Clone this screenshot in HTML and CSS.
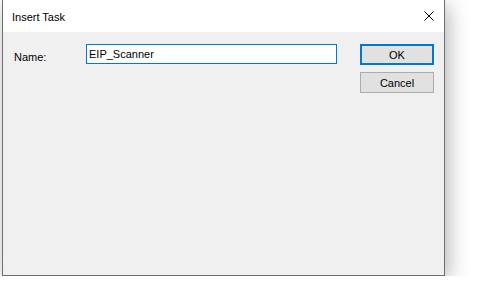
FILE: index.html
```html
<!DOCTYPE html>
<html lang="en">
<head>
    <meta charset="UTF-8">
    <title>Insert Task</title>
    <link rel="stylesheet" href="styles.css">
</head>
<body>
    <div class="dialog">
        <div class="title-bar">
            <span class="title">Insert Task</span>
            <span class="close">
                <svg width="10" height="10" viewBox="0 0 10 10">
                    <path d="M0.5 0.5 L9.5 9.5 M9.5 0.5 L0.5 9.5" stroke="#000" stroke-width="1" fill="none"/>
                </svg>
            </span>
        </div>
        <div class="content">
            <div class="field">
                <label for="name">Name:</label>
                <input type="text" id="name" value="EIP_Scanner">
            </div>
            <div class="buttons">
                <button class="default"><u>O</u>K</button>
                <button>Cancel</button>
            </div>
        </div>
    </div>
</body>
</html>
```
FILE: styles.css
```css
body {
    margin: 0;
    padding: 0;
    background-color: #fff;
    font-family: 'Liberation Sans', Arial, sans-serif;
    font-size: 11px;
    color: #000;
}

.dialog {
    margin-left: 2px;
    width: 441px;
    height: 275px;
    background-color: #f0f0f0;
    border: 1px solid #6e6e6e;
    border-top: none;
    box-shadow: 3px 5px 20px rgba(0, 0, 0, 0.3);
    display: flex;
    flex-direction: column;
}

.title-bar {
    height: 32px;
    background-color: #fff;
    display: flex;
    align-items: center;
    justify-content: space-between;
    padding: 1px 10px 0 9px;
    box-sizing: border-box;
}

.title {
    font-size: 11px;
}

.close {
    display: flex;
    margin-top: -2px;
}

.content {
    display: flex;
    padding: 12px 11px 0 11px;
    gap: 23px;
}

.field {
    display: flex;
    align-items: flex-start;
}

.field label {
    width: 72px;
    padding-top: 7px;
}

.field input {
    width: 251px;
    height: 20px;
    box-sizing: border-box;
    border: 1px solid #0078d7;
    background-color: #fff;
    font-family: inherit;
    font-size: 11px;
    padding: 0 2px;
    margin: 0;
    outline: none;
}

.buttons {
    display: flex;
    flex-direction: column;
    gap: 7px;
}

.buttons button {
    width: 74px;
    height: 21px;
    box-sizing: border-box;
    background-color: #e1e1e1;
    border: 1px solid #adadad;
    font-family: inherit;
    font-size: 11px;
    padding: 0;
    margin: 0;
    color: #000;
}

.buttons button.default {
    border: 2px solid #0078d7;
}

.buttons u {
    text-decoration: none;
}
```
